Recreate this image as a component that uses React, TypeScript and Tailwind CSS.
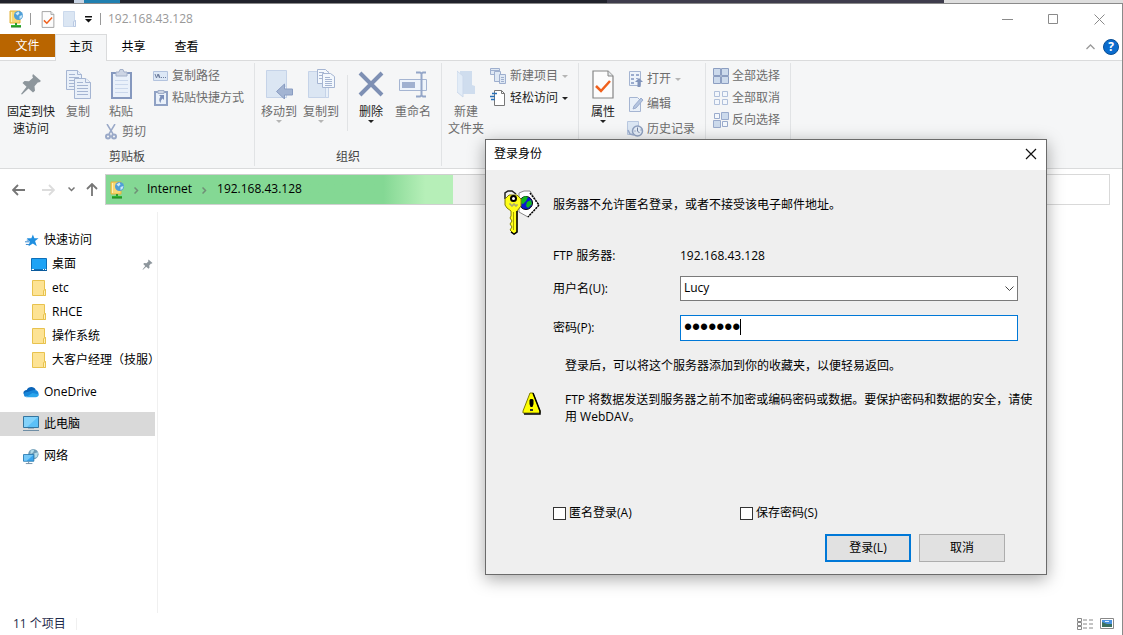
import type { ReactNode } from "react";

/* ---------- small shared icons ---------- */

function FtpIcon() {
  return (
    <svg width="15" height="18" viewBox="0 0 15 18">
      <path d="M1 1h10v12H1z" fill="#f7d774" stroke="#e2b33c" />
      <path d="M2.500 2v10" stroke="#fdf0b4" />
      <circle cx="9.500" cy="5.500" r="4.500" fill="#4f9fd8" />
      <path d="M6.500 3.500l3-2 1 2-2 2zM10.500 6l3-1-1 3-2 1z" fill="#cfe9f8" />
      <path d="M6 13h2v2H6z" fill="#2f9e2f" />
      <path d="M2 15h10v2H2z" fill="#2fb52f" />
      <path d="M2 17h10" stroke="#1f7a1f" />
    </svg>
  );
}

function Pin({ size }: { size: number }) {
  return (
    <svg width={size} height={size} viewBox="0 0 22 22" fill="#8d969c">
      <path d="M13 1l8 7-2 1.500-1-.3-3.500 4 .5 4.500-2 1.800-4.500-4L2 21.500 1 21l5.500-7.200L2.500 10l2-2 4.500.3 4-3.600-.7-1.700z" />
    </svg>
  );
}

function Caret({ color = "#222" }: { color?: string }) {
  return (
    <svg width="6" height="3" viewBox="0 0 6 3" className="shrink-0">
      <path d="M0 0h6L3 3z" fill={color} />
    </svg>
  );
}

function PropertiesDoc({ width, height }: { width: number; height: number }) {
  return (
    <svg width={width} height={height} viewBox="0 0 22 29">
      <path d="M1 1h15l5 5v22H1z" fill="#fcfcfc" stroke="#858585" strokeWidth="1.200" />
      <path d="M16 1v5h5" fill="#e4e8ea" stroke="#858585" />
      <path d="M4 16l5 5 9-10" fill="none" stroke="#f0601c" strokeWidth="2.500" />
    </svg>
  );
}

function FolderIcon() {
  return (
    <svg width="14" height="17" viewBox="0 0 14 17">
      <path d="M.5.5h12v9h1v6H.5z" fill="#fde394" stroke="#e8c24e" />
      <path d="M11.500 15.500v-5l2-1v6z" fill="#fff1b8" stroke="#e8c24e" />
    </svg>
  );
}

/* ---------- ribbon icons ---------- */

function CopyIcon() {
  return (
    <svg width="25" height="29" viewBox="0 0 25 29" fill="#e9f0f9" stroke="#a5b5d2">
      <path d="M.5.5h11l4 4v15H.5z" />
      <path d="M11.500.5v4h4M3 4.500h6M3 7.500h10M3 10.500h10M3 13.500h10M3 16.500h10" />
      <path d="M8.500 8.500h11l5 4v16h-16z" />
      <path d="M19.500 8.500v4h5M11 12.500h6M11 15.500h11M11 18.500h11M11 21.500h11M11 24.500h11" />
    </svg>
  );
}

function PasteIcon() {
  return (
    <svg width="21" height="30" viewBox="0 0 21 30">
      <path d="M1 4h19v25H1z" fill="#eaf1fa" stroke="#8598be" strokeWidth="2" />
      <path d="M5 3h3l1-2.500h3L13 3h3v4H5z" fill="#cdd5e4" stroke="#a3b0c9" />
      <path d="M4 11.500h13M4 15.500h13M4 19.500h13M4 23.500h13" stroke="#cbd8ec" />
    </svg>
  );
}

function ScissorsIcon() {
  return (
    <svg width="12" height="16" viewBox="0 0 12 16" fill="none" stroke="#9aa9c8">
      <path d="M2 0l6 10M10 0L4 10" strokeWidth="1.500" />
      <circle cx="3" cy="12.500" r="2" strokeWidth="2" />
      <circle cx="9" cy="12.500" r="2" strokeWidth="2" />
    </svg>
  );
}

function PathIcon() {
  return (
    <svg width="15" height="10" viewBox="0 0 15 10">
      <path d="M.5.5h14v9H.5z" fill="#dde8f6" stroke="#b3c3de" />
      <path d="M2 3l1.500 4L5 3l1.500 4M5.500 3L7 7" fill="none" stroke="#6f7f9f" />
      <path d="M8 6.500h1M10 6.500h1M12 6.500h1" stroke="#6f7f9f" />
    </svg>
  );
}

function PasteShortcutIcon() {
  return (
    <svg width="14" height="16" viewBox="0 0 14 16">
      <path d="M1 2h12v13H1z" fill="#eaf1fa" stroke="#8fa1c4" strokeWidth="2" />
      <path d="M4 .5h6v3H4z" fill="#cdd5e4" stroke="#a3b0c9" />
      <path d="M5 5h5v5L8.500 8.500Q6.500 10 6.500 13 4 10 6.500 6.500z" fill="#7b8fba" />
    </svg>
  );
}

function MoveToIcon() {
  return (
    <svg width="27" height="29" viewBox="0 0 27 29">
      <path d="M.5.5h20v27H.5z" fill="#dbe6f3" stroke="#c5d3e8" />
      <path d="M17.500 27.500v-10l3-2v12z" fill="#e8f0f9" stroke="#c5d3e8" />
      <path d="M10.500 21.500l8-7.500v5h8v6h-8v4z" fill="#a3b4d2" stroke="#8a9dc2" />
    </svg>
  );
}

function CopyToIcon() {
  return (
    <svg width="27" height="30" viewBox="0 0 27 30">
      <path d="M.5 2.500h20v26H.5z" fill="#dbe6f3" stroke="#c5d3e8" />
      <path d="M17.500 28.500v-10l3-2v12z" fill="#e8f0f9" stroke="#c5d3e8" />
      <g fill="#f3f8fd" stroke="#a5b5d2">
        <path d="M9.500.5h8l3 3v11h-11zM11 3.500h5M11 6.500h6M11 9.500h6" />
        <path d="M14.500 4.500h8l4 3v11h-12zM17 8.500h5M17 10.500h7M17 12.500h7M17 14.500h7M17 16.500h7" />
      </g>
    </svg>
  );
}

function DeleteIcon() {
  return (
    <svg width="26" height="26" viewBox="0 0 26 26">
      <path d="M2 2l22 22M24 2L2 24" stroke="#7e90b4" strokeWidth="4" />
    </svg>
  );
}

function RenameIcon() {
  return (
    <svg width="29" height="27" viewBox="0 0 29 27" fill="none">
      <path d="M.5 8.500h27v11H.5z" fill="#eef4fb" stroke="#a5b5d2" />
      <path d="M3 11h13v6H3z" fill="#a0b1d0" />
      <path d="M17 1.500h4l1.500 1L24 1.500h3M17 25.500h4l1.500-1 1.500 1h3M22.500 2v23" stroke="#94a6c8" strokeWidth="2" />
    </svg>
  );
}

function NewFolderIcon() {
  return (
    <svg width="19" height="28" viewBox="0 0 19 28">
      <path d="M3 1h12v14l3 1v8H3z" fill="#cfddee" />
      <path d="M0 1l6 5v21L0 22z" fill="#e2ecf7" stroke="#ccd9eb" />
    </svg>
  );
}

function NewItemIcon() {
  return (
    <svg width="17" height="16" viewBox="0 0 17 16" fill="#dfe8f4" stroke="#9eafce">
      <path d="M.5.5h9v6h-9zM.5 2.500h9" />
      <path d="M4.500 3.500h6v10h-6z" />
      <path d="M9.500 6.500h6v9h-6zM11 9.500h3M11 11.500h3M11 13.500h3" />
    </svg>
  );
}

function EasyAccessIcon() {
  return (
    <svg width="17" height="16" viewBox="0 0 17 16">
      <path d="M4.500.5h7l3 3v12h-10z" fill="#fff" stroke="#777" />
      <path d="M11.500.5v3h3" fill="none" stroke="#777" />
      <path d="M2 3.500h5M0 6.500h5M1 9.500h4" stroke="#2a72b8" strokeWidth="1.500" />
    </svg>
  );
}

function OpenIcon() {
  return (
    <svg width="16" height="17" viewBox="0 0 16 17">
      <path d="M1.500.5h11v14h-11z" fill="#edf3fa" stroke="#a5b5d2" />
      <path d="M3 3h3v2H3zM3 7h3v2H3zM3 11h3v2H3zM8 3h3v2H8zM8 7h2v1H8z" fill="#9bacce" />
      <path d="M11 7l4 4h-2.500v5h-3v-5H7z" fill="#8194ba" />
    </svg>
  );
}

function EditIcon() {
  return (
    <svg width="16" height="17" viewBox="0 0 16 17">
      <path d="M1.500 1.500h8l3 3v11h-11z" fill="#e9f0f9" stroke="#a5b5d2" />
      <path d="M5 13l1-3 7-8 2 2-7 8z" fill="#b4c5e0" stroke="#9bacce" />
    </svg>
  );
}

function HistoryIcon() {
  return (
    <svg width="17" height="16" viewBox="0 0 17 16">
      <path d="M.5.5h11v13H.5z" fill="#dbe6f3" stroke="#b9c8e0" />
      <circle cx="10.500" cy="10" r="5" fill="#e5edf7" stroke="#8fa0bf" strokeWidth="1.500" />
      <path d="M10.500 6.500V10l2 2M7.500 10h1M13.500 9h1" fill="none" stroke="#70809f" />
      <path d="M1 9l2 4 4 1" fill="none" stroke="#9aabcc" strokeWidth="1.500" />
    </svg>
  );
}

function SelectAllIcon() {
  return (
    <svg width="16" height="16" viewBox="0 0 16 16" fill="#ccdaec" stroke="#8c9ec1">
      <path d="M.5.500h7v7h-7zM8.500.5h7v7h-7zM.5 8.500h7v7h-7zM8.500 8.500h7v7h-7z" />
    </svg>
  );
}

function SelectNoneIcon() {
  return (
    <svg width="16" height="16" viewBox="0 0 16 16" fill="#f3f7fc" stroke="#b1c0da">
      <path d="M1.500 1.500h5v5h-5zM9.500 1.500h5v5h-5zM1.500 9.500h5v5h-5zM9.500 9.500h5v5h-5z" />
    </svg>
  );
}

function InvertIcon() {
  return (
    <svg width="16" height="16" viewBox="0 0 16 16" stroke="#9aabcc">
      <path d="M1.500 1.500h5v5h-5zM9.500 9.500h5v5h-5z" fill="#f3f7fc" />
      <path d="M8.500.5h7v7h-7zM.5 8.500h7v7h-7z" fill="#ccdaec" />
    </svg>
  );
}

/* ---------- sidebar icons ---------- */

function StarIcon() {
  return (
    <svg width="14" height="13" viewBox="0 0 16 14">
      <path d="M9 0l1.700 4.500H15.500L11.500 7.500 13.500 13.500 9 10.500 4 13.500l1.500-5.500L2 4.500h5.300z" fill="#1f8fe0" />
      <path d="M2 6.500h3M0 8.500h5M1 11.500h4" stroke="#1a78c8" />
    </svg>
  );
}

function DesktopIcon() {
  return (
    <svg width="16" height="13" viewBox="0 0 16 13">
      <path d="M.5.5h15v11H.5z" fill="#1ea3f5" stroke="#0e6fb8" />
      <path d="M0 12.500h16" stroke="#0a5a9c" />
      <path d="M1 11.500h2M12 11.500h1M14 11.500h1" stroke="#fff" />
    </svg>
  );
}

function CloudIcon() {
  return (
    <svg width="17" height="12" viewBox="0 0 17 12">
      <path d="M3 10C-1 9 0 4 4 4c1-4 8-4.500 9.500-.5L8 9z" fill="#0a64b8" />
      <path d="M2 11c-2-2-1-5.500 3-5l6-2c5-1 6.500 3.500 5 6z" fill="#1686d9" />
      <path d="M3 11.500l7-4.500 6.500 1.500c.5 2-1 3-3 3z" fill="#2aa5ec" />
    </svg>
  );
}

function ComputerIcon() {
  return (
    <svg width="16" height="16" viewBox="0 0 16 16">
      <path d="M.5.5h15v11H.5z" fill="#5cc0f7" stroke="#34759f" />
      <path d="M1 1h14L4 11H1z" fill="#83d2fa" />
      <path d="M5 12.500h6" stroke="#9fb4c2" />
      <path d="M0 14.500h16" stroke="#6f8ea5" />
    </svg>
  );
}

function NetworkIcon() {
  return (
    <svg width="17" height="17" viewBox="0 0 17 17">
      <circle cx="11" cy="6" r="5.500" fill="#6f9cb6" />
      <path d="M8 2l4-1-1 3-3 2zM12 5l4-1-1 5-3 1z" fill="#b5dcea" />
      <path d="M.5 6.500h11v7H.5z" fill="#3aa6f0" stroke="#2c7bb0" />
      <path d="M1 7h10L4 13H1z" fill="#74c8f8" />
      <path d="M6 14v2M3 16h7" stroke="#6f8ea5" />
    </svg>
  );
}

/* ---------- dialog icons ---------- */

function KeyIcon() {
  return (
    <svg width="37" height="45" viewBox="0 0 37 45">
      <path d="M16 3l5-2h6l9 14-11 12-9-5z" fill="#fff" stroke="#888" />
      <path d="M27 3l9 12-11 12" fill="none" stroke="#000" strokeWidth="1.500" strokeDasharray="2 1" />
      <circle cx="23" cy="13" r="6.500" fill="#0a18d0" stroke="#000" />
      <path d="M18 9l4-3 3 1-2 4-3 3-3-1zM24 12l4-2 1 4-4 4-2-2z" fill="#11b81c" />
      <path d="M2 9V3l3-2h4l4 3" fill="none" stroke="#222" strokeWidth="1.500" />
      <path d="M6 5h8l4 4v7l-4 5v21l-3 2-4-4 2-3-2-3 2-3-2-3 1-2v-5l-4-3-2-3V9z" fill="#ffff19" stroke="#807c00" />
      <path d="M14 21v21l-3 2-3-2" fill="none" stroke="#000" strokeWidth="1.500" />
      <circle cx="10.500" cy="8.500" r="2.500" fill="#fff" stroke="#000" strokeWidth="2" />
      <path d="M10.500 22v18" stroke="#a5a200" />
      <path d="M6 14h2v2h2v-2h2v2h2v-2" fill="none" stroke="#8f8f8f" />
    </svg>
  );
}

function WarningIcon() {
  return (
    <svg width="19" height="23" viewBox="0 0 19 23">
      <path d="M8 1h3l7 18v2H1v-2z" fill="#ff0" stroke="#807c00" />
      <path d="M11 1l7 18v3H2" fill="none" stroke="#000" strokeWidth="1.500" />
      <path d="M7.500 8l1-1h2l1 1v4l-1 3h-2l-1-3z" fill="#000" />
      <path d="M8 17h3v2H8z" fill="#333" />
    </svg>
  );
}

/* ---------- building blocks ---------- */

type BigButtonProps = {
  icon: ReactNode;
  lines: string[];
  width: string;
  enabled?: boolean;
  menu?: boolean;
};

function BigButton({ icon, lines, width, enabled, menu }: BigButtonProps) {
  return (
    <button className={`flex flex-col items-center ${width} ${enabled ? "text-[#1b1b1b]" : "text-[#6d6d6d]"}`}>
      <span className="flex h-[30px] items-center justify-center">{icon}</span>
      <span className="mt-1 leading-[17px] whitespace-nowrap">
        {lines.map((line) => (
          <span key={line} className="block">
            {line}
          </span>
        ))}
      </span>
      {menu && <Caret color={enabled ? "#222" : "#b5b5b5"} />}
    </button>
  );
}

type SmallButtonProps = {
  icon: ReactNode;
  label: string;
  enabled?: boolean;
  menu?: boolean;
};

function SmallButton({ icon, label, enabled, menu }: SmallButtonProps) {
  return (
    <button className={`flex h-[22px] items-center whitespace-nowrap ${enabled ? "text-[#1b1b1b]" : "text-[#6d6d6d]"}`}>
      <span className="mr-[3px] flex w-[17px] justify-center">{icon}</span>
      {label}
      {menu && (
        <span className="ml-1">
          <Caret color={enabled ? "#222" : "#b5b5b5"} />
        </span>
      )}
    </button>
  );
}

function Group({ label, width, children }: { label?: string; width: string; children: ReactNode }) {
  return (
    <div className={`my-0.5 flex shrink-0 flex-col border-r border-[#e1e3e5] ${width}`}>
      <div className="flex flex-1 items-start pt-1.5">{children}</div>
      {label && <div className="pb-px text-center text-[#444]">{label}</div>}
    </div>
  );
}

const quickAccess = [
  { label: "桌面", icon: <DesktopIcon />, pinned: true },
  { label: "etc", icon: <FolderIcon /> },
  { label: "RHCE", icon: <FolderIcon /> },
  { label: "操作系统", icon: <FolderIcon /> },
  { label: "大客户经理（技服）", icon: <FolderIcon /> },
];

const places = [
  { label: "OneDrive", icon: <CloudIcon /> },
  { label: "此电脑", icon: <ComputerIcon />, selected: true },
  { label: "网络", icon: <NetworkIcon /> },
];

function Ribbon() {
  return (
    <div className="flex h-[108px] border-b border-[#dadbdc] bg-[#f5f6f7]">
      <Group label="剪贴板" width="w-[255px]">
        <BigButton icon={<Pin size={22} />} lines={["固定到快", "速访问"]} width="w-[62px]" enabled />
        <BigButton icon={<CopyIcon />} lines={["复制"]} width="w-8" />
        <div className="w-[54px]">
          <BigButton icon={<PasteIcon />} lines={["粘贴"]} width="w-[54px]" />
          <div className="pt-px pl-2">
            <SmallButton icon={<ScissorsIcon />} label="剪切" />
          </div>
        </div>
        <div className="-mt-1 pl-1">
          <SmallButton icon={<PathIcon />} label="复制路径" />
          <SmallButton icon={<PasteShortcutIcon />} label="粘贴快捷方式" />
        </div>
      </Group>

      <Group label="组织" width="w-[187px]">
        <div className="flex pl-[3px]">
          <BigButton icon={<MoveToIcon />} lines={["移动到"]} width="w-[42px]" menu />
          <BigButton icon={<CopyToIcon />} lines={["复制到"]} width="w-[42px]" menu />
        </div>
        <div className="mr-1 ml-[5px] mt-1.5 h-14 w-px bg-[#e1e3e5]" />
        <BigButton icon={<DeleteIcon />} lines={["删除"]} width="w-[38px]" enabled menu />
        <BigButton icon={<RenameIcon />} lines={["重命名"]} width="w-[46px]" />
      </Group>

      <Group width="w-[137px]">
        <BigButton icon={<NewFolderIcon />} lines={["新建", "文件夹"]} width="w-12" />
        <div className="-mt-1">
          <SmallButton icon={<NewItemIcon />} label="新建项目" menu />
          <SmallButton icon={<EasyAccessIcon />} label="轻松访问" enabled menu />
        </div>
      </Group>

      <Group width="w-[127px]">
        <BigButton icon={<PropertiesDoc width={22} height={29} />} lines={["属性"]} width="w-12" enabled menu />
        <div className="-mt-px flex flex-col gap-[3px]">
          <SmallButton icon={<OpenIcon />} label="打开" menu />
          <SmallButton icon={<EditIcon />} label="编辑" />
          <SmallButton icon={<HistoryIcon />} label="历史记录" />
        </div>
      </Group>

      <Group width="w-[85px]">
        <div className="-mt-1 pl-1.5">
          <SmallButton icon={<SelectAllIcon />} label="全部选择" />
          <SmallButton icon={<SelectNoneIcon />} label="全部取消" />
          <SmallButton icon={<InvertIcon />} label="反向选择" />
        </div>
      </Group>
    </div>
  );
}

function AddressRow() {
  return (
    <div className="flex shrink-0 items-center pt-[5px] pr-3 pb-[7px]">
      <div className="flex w-[105px] items-center pl-3">
        <button aria-label="后退" className="w-[30px]">
          <svg width="13" height="12" viewBox="0 0 13 12" fill="none" stroke="#767676" strokeWidth="1.800">
            <path d="M6 1L1 6l5 5M1 6h12" />
          </svg>
        </button>
        <button aria-label="前进" className="w-[26px]">
          <svg width="13" height="12" viewBox="0 0 13 12" fill="none" stroke="#dcdcdc" strokeWidth="1.800">
            <path d="M7 1l5 5-5 5M12 6H0" />
          </svg>
        </button>
        <button aria-label="最近浏览的位置" className="w-[18px]">
          <svg width="7" height="5" viewBox="0 0 7 5" fill="none" stroke="#767676" strokeWidth="1.500">
            <path d="M.5.5l3 3 3-3" />
          </svg>
        </button>
        <button aria-label="上移">
          <svg width="12" height="13" viewBox="0 0 12 13" fill="none" stroke="#767676" strokeWidth="1.800">
            <path d="M1 6l5-5 5 5M6 1v12" />
          </svg>
        </button>
      </div>
      <div className="flex h-[31px] flex-1 border border-[#d0d0d0] bg-[#f0f0f0]">
        <div className="flex w-[347px] items-center bg-linear-to-r from-[#84d894] from-80% to-[#b6efb8] to-92% pl-1">
          <FtpIcon />
          <span className="w-[22px] text-center">
            <svg width="5" height="7" viewBox="0 0 5 7" className="inline" fill="none" stroke="#6f8f76" strokeWidth="1.500">
              <path d="M.5.5l3 3-3 3" />
            </svg>
          </span>
          <a href="#internet" className="pb-0.5 text-black">Internet</a>
          <span className="w-[25px] text-center">
            <svg width="5" height="7" viewBox="0 0 5 7" className="inline" fill="none" stroke="#6f8f76" strokeWidth="1.500">
              <path d="M.5.5l3 3-3 3" />
            </svg>
          </span>
          <a href="#host" className="pb-0.5 text-black">192.168.43.128</a>
        </div>
      </div>
      <input aria-label="搜索" className="ml-3 h-[31px] w-[220px] border border-[#d9d9d9] bg-white px-2 outline-none" />
    </div>
  );
}

function Sidebar() {
  return (
    <nav className="w-[158px] shrink-0 border-r border-[#f0f0f0] pt-4">
      <a href="#quick" className="flex h-6 items-center gap-[5px] pl-[23px]">
        <span className="flex w-4 justify-end"><StarIcon /></span>
        快速访问
      </a>
      {quickAccess.map((item) => (
        <a key={item.label} href="#folder" className="flex h-6 items-center gap-[5px] pr-1 pl-[31px] whitespace-nowrap">
          <span className="flex w-4 shrink-0 justify-center">{item.icon}</span>
          {item.label}
          {item.pinned && (
            <span className="ml-auto">
              <Pin size={11} />
            </span>
          )}
        </a>
      ))}
      <div className="mt-2 flex flex-col gap-2">
        {places.map((item) => (
          <a
            key={item.label}
            href="#place"
            className={`mr-0.5 flex h-6 items-center gap-[5px] pl-[23px] ${item.selected ? "bg-[#d9d9d9]" : ""}`}
          >
            <span className="flex w-4 justify-center">{item.icon}</span>
            {item.label}
          </a>
        ))}
      </div>
    </nav>
  );
}

function LoginDialog() {
  return (
    <form
      role="dialog"
      aria-label="登录身份"
      className="absolute top-[139px] left-[485px] w-[562px] border border-[#6b6b6b] bg-[#efefef] shadow-[0_4px_16px_rgba(0,0,0,0.35)]"
    >
      <div className="flex h-[30px] items-center justify-between bg-white pr-[9px] pb-0.5 pl-2">
        <h1>登录身份</h1>
        <button type="button" aria-label="关闭">
          <svg width="12" height="12" viewBox="0 0 12 12" stroke="#111" strokeWidth="1.200">
            <path d="M1 1l10 10M11 1L1 11" />
          </svg>
        </button>
      </div>

      <div className="flex pt-5 pl-[17px]">
        <div className="w-[50px] shrink-0"><KeyIcon /></div>
        <p className="pt-[7px]">服务器不允许匿名登录，或者不接受该电子邮件地址。</p>
      </div>

      <div className="mt-2 pr-7 pl-[67px]">
        <div className="flex h-[26px] items-center">
          <span className="w-[127px]">FTP 服务器:</span>
          <span>192.168.43.128</span>
        </div>
        <div className="mt-[7px] flex items-center">
          <label htmlFor="user" className="w-[127px]">用户名(U):</label>
          <div className="relative flex-1">
            <select id="user" className="block h-[25px] w-full appearance-none border border-[#7a7a7a] bg-white pb-0.5 pl-[3px] outline-none">
              <option>Lucy</option>
            </select>
            <svg width="9" height="6" viewBox="0 0 9 6" className="pointer-events-none absolute top-2.5 right-1" fill="none" stroke="#444">
              <path d="M.5.5l4 4 4-4" />
            </svg>
          </div>
        </div>
        <div className="mt-3.5 flex items-center">
          <label htmlFor="password" className="w-[127px]">密码(P):</label>
          <div className="relative flex-1">
            <input
              id="password"
              type="password"
              defaultValue="lucy123"
              className="block h-[26px] w-full border border-[#0078d7] bg-white pb-0.5 pl-[3px] font-['Liberation_Sans'] text-[23px] outline-none"
            />
            <span className="absolute top-1 left-[60px] h-4 w-px bg-black" />
          </div>
        </div>
      </div>

      <p className="mt-[17px] pl-[79px]">登录后，可以将这个服务器添加到你的收藏夹，以便轻易返回。</p>

      <div className="mt-[17px] flex pr-2 pl-9">
        <div className="w-[43px] shrink-0 pt-px"><WarningIcon /></div>
        <p className="leading-[17px]">
          FTP 将数据发送到服务器之前不加密或编码密码或数据。要保护密码和数据的安全，请使用 WebDAV。
        </p>
      </div>

      <div className="mt-20 flex pl-[67px]">
        <label className="flex w-[187px] items-center gap-[3px]">
          <input type="checkbox" className="size-[13px] appearance-none border border-[#333] bg-white" />
          匿名登录(A)
        </label>
        <label className="flex items-center gap-[3px]">
          <input type="checkbox" className="size-[13px] appearance-none border border-[#333] bg-white" />
          保存密码(S)
        </label>
      </div>

      <div className="mt-[13px] flex justify-end gap-2 pr-[41px] pb-3">
        <button type="button" className="h-7 w-[86px] border-2 border-[#0078d7] bg-[#e1e1e1]">登录(L)</button>
        <button type="button" className="h-7 w-[86px] border border-[#adadad] bg-[#e1e1e1]">取消</button>
      </div>
    </form>
  );
}

export default function App() {
  return (
    <div className="relative flex min-h-screen flex-col overflow-hidden bg-white font-['Open_Sans','Noto_Sans_CJK_SC',sans-serif] text-xs leading-4 text-black">
      {/* strip of the desktop behind the window */}
      <div className="flex h-[3px] bg-[#20222b]">
        <div className="ml-[74px] w-2.5 bg-[#c8d4e4]" />
        <div className="w-9 bg-[#1f7fb0]" />
        <div className="flex-1" />
        <div className="w-[30%] bg-[#3e3c4c]" />
        <div className="w-[179px] bg-[#dedede]" />
      </div>

      <div className="flex flex-1 flex-col border-t border-r border-[#8a8a8a]">
        {/* Title bar */}
        <header className="flex h-[30px] shrink-0 items-center">
          <div className="flex flex-1 items-center pl-[9px]">
            <FtpIcon />
            <span className="mx-1.5 h-3 w-px bg-[#999]" />
            <button aria-label="属性" className="ml-1"><PropertiesDoc width={14} height={17} /></button>
            <button aria-label="新建文件夹" className="ml-2">
              <svg width="14" height="17" viewBox="0 0 14 17">
                <path d="M.5.500h11v9h1v6H.5z" fill="#dbe6f3" stroke="#cbd9ec" />
                <path d="M10.500 15.500v-5l2-1v6z" fill="#eef4fb" stroke="#b9c9e2" />
              </svg>
            </button>
            <button aria-label="自定义快速访问工具栏" className="ml-2">
              <svg width="8" height="7" viewBox="0 0 8 7">
                <path d="M0 0h7v1.500H0zM0 3h7L3.500 6.500z" fill="#111" />
              </svg>
            </button>
            <span className="mx-[7px] h-3 w-px bg-[#999]" />
            <span className="text-[#999]">192.168.43.128</span>
          </div>
          <button aria-label="最小化" className="flex h-full w-[46px] items-center justify-center">
            <svg width="11" height="11" viewBox="0 0 11 11" stroke="#8a8a8a"><path d="M0 5.500h11" /></svg>
          </button>
          <button aria-label="最大化" className="flex h-full w-[46px] items-center justify-center">
            <svg width="11" height="11" viewBox="0 0 11 11" fill="none" stroke="#8a8a8a"><path d="M.5.500h9v9h-9z" /></svg>
          </button>
          <button aria-label="关闭" className="flex h-full w-[46px] items-center justify-center">
            <svg width="11" height="11" viewBox="0 0 11 11" stroke="#8a8a8a"><path d="M.5.500l10 10M10.500.5l-10 10" /></svg>
          </button>
        </header>

        {/* Tabs */}
        <div className="flex h-[27px] shrink-0 border-b border-[#dadbdc]">
          <button className="h-[23px] w-[55px] bg-[#b96500] text-white">文件</button>
          <button className="-mb-px w-[52px] border border-b-0 border-[#dadbdc] bg-[#f5f6f7] pb-0.5">主页</button>
          <button className="w-[53px]">共享</button>
          <button className="w-[53px]">查看</button>
          <div className="ml-auto flex items-center gap-2 pr-[3px]">
            <button aria-label="最小化功能区">
              <svg width="9" height="6" viewBox="0 0 9 6" fill="none" stroke="#999" strokeWidth="1.300">
                <path d="M.5 5l4-4 4 4" />
              </svg>
            </button>
            <button aria-label="帮助" className="size-4 rounded-full border border-[#0a4f94] bg-[#0a6cce] text-xs leading-3 font-bold text-white">
              ?
            </button>
          </div>
        </div>

        <Ribbon />
        <AddressRow />

        <div className="flex flex-1">
          <Sidebar />
          <main className="flex-1" />
        </div>

        {/* Status bar */}
        <footer className="flex h-[22px] shrink-0 items-center pr-2 pl-[13px] text-[#1e2a4a]">
          <span className="mr-2.5">11 个项目</span>
          <span className="h-3 w-px bg-[#f0f0f0]" />
          <div className="ml-auto flex items-center gap-[7px]">
            <button aria-label="详细信息">
              <svg width="16" height="12" viewBox="0 0 16 12" fill="none" stroke="#888">
                <path d="M.5.500h4v3h-4zM.5 4.500h4v3h-4zM.5 8.500h4v3h-4zM6 2h4M12 2h4M6 6h4M12 6h4M6 10h4M12 10h4" />
              </svg>
            </button>
            <button aria-label="大图标">
              <svg width="14" height="12" viewBox="0 0 14 12">
                <path d="M.5.500h13v10H.5z" fill="#fff" stroke="#888" />
                <path d="M2 2h10v7H2z" fill="#4a92e0" />
                <path d="M2 4l5 2 5 0v3H2z" fill="#3a7060" />
                <path d="M5 3h4v1H5z" fill="#dff0fb" />
              </svg>
            </button>
          </div>
        </footer>
      </div>

      <LoginDialog />
    </div>
  );
}
